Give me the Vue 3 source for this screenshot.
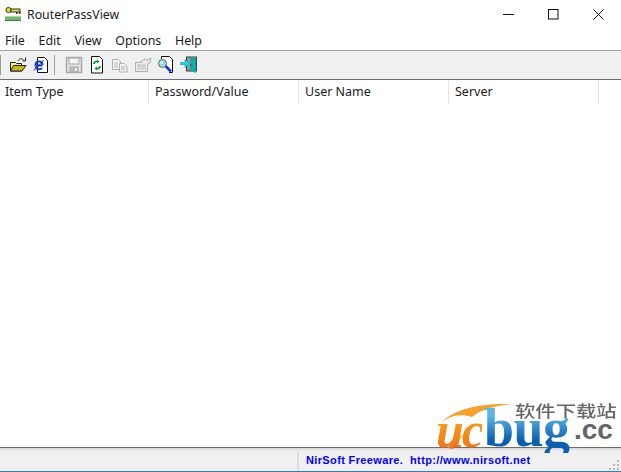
<template>
  <div class="window">
    <!-- Title bar -->
    <div class="titlebar">
      <svg class="app-icon" width="16" height="16" viewBox="0 0 16 16">
        <rect x="0" y="10" width="16" height="5" fill="#6fb56f" />
        <rect x="0" y="10" width="16" height="1" fill="#a8d8a8" />
        <rect x="0" y="14" width="16" height="1" fill="#3f7f3f" />
        <circle cx="3.5" cy="4" r="2.6" fill="#e8e020" stroke="#333" stroke-width="1" />
        <rect x="6" y="3" width="9" height="3" fill="#e8e020" stroke="#333" stroke-width="1" />
        <rect x="11" y="6" width="1.5" height="2" fill="#333" />
        <rect x="14" y="6" width="1.5" height="2" fill="#333" />
      </svg>
      <span class="title">RouterPassView</span>
      <div class="win-controls">
        <svg width="11" height="11" viewBox="0 0 11 11"><path d="M0 5.5h11" stroke="#111" fill="none" /></svg>
        <svg width="11" height="11" viewBox="0 0 11 11"><rect x="0.5" y="0.5" width="9.5" height="9.5" stroke="#111" fill="none" /></svg>
        <svg width="11" height="11" viewBox="0 0 11 11"><path d="M0.5 0.5l10 10M10.5 0.5l-10 10" stroke="#111" fill="none" /></svg>
      </div>
    </div>

    <!-- Menu -->
    <div class="menubar">
      <span v-for="item in menus" :key="item">{{ item }}</span>
    </div>

    <!-- Toolbar -->
    <div class="toolbar">
      <div class="grip"></div>
      <button class="tool">
        <svg width="18" height="18" viewBox="0 0 18 18">
          <path d="M1.500 6.500h5l1 1h5v7.500h-11z" fill="#f4ee7c" stroke="#222" />
          <path d="M1.500 15l3-5.500h12.500l-4 5.500z" fill="#c8b820" stroke="#222" />
          <path d="M9 5c1-2.500 4-3 5-1.500l1 1" fill="none" stroke="#222" />
          <path d="M16.500 1.500v3.500h-3" fill="none" stroke="#222" />
        </svg>
      </button>
      <button class="tool">
        <svg width="18" height="18" viewBox="0 0 18 18">
          <path d="M5.500 1.500h7l3 3v12h-10z" fill="#fff" stroke="#111" />
          <path d="M10.500 9.500h-7c0-2.500 1.500-4 3.500-4s3.500 1.500 3.500 3.500M10 12c-1 1.500-5 2-6.500-1" fill="none" stroke="#1a3fd0" stroke-width="2" />
          <path d="M1.500 14c2 0 7-6 10-10" fill="none" stroke="#0a2aa0" />
        </svg>
      </button>
      <div class="sep"></div>
      <button class="tool">
        <svg width="18" height="18" viewBox="0 0 18 18">
          <path d="M1.500 1.500h15v15h-15z" fill="#e4e4e4" stroke="#a8a8a8" stroke-width="1.500" />
          <rect x="4" y="2" width="10" height="6" fill="#f4f4f4" stroke="#a8a8a8" />
          <rect x="5" y="11" width="8" height="5" fill="#bdbdbd" stroke="#a8a8a8" />
          <rect x="10" y="12" width="2" height="3" fill="#f0f0f0" />
        </svg>
      </button>
      <button class="tool">
        <svg width="18" height="18" viewBox="0 0 18 18">
          <path d="M3.500 0.500h8l3 3v13.500h-11z" fill="#fff" stroke="#111" />
          <path d="M6 8c0-2 2-3 4-2.500M12 10c0 2-2 3-4 2.500" fill="none" stroke="#0d9a2a" stroke-width="1.800" />
          <path d="M9 3.500l2.500 2-2.500 2zM9 10.500l-2.500 2 2.500 2z" fill="#0d9a2a" />
        </svg>
      </button>
      <button class="tool">
        <svg width="18" height="18" viewBox="0 0 18 18">
          <path d="M1.500 3.500h6l2 2v8h-8z" fill="#f0f0f0" stroke="#b0b0b0" />
          <path d="M3 7h4M3 9h4M3 11h4" stroke="#c0c0c0" />
          <path d="M8.500 7.500h5l2.500 2.500v6h-7.500z" fill="#f0f0f0" stroke="#b0b0b0" />
          <path d="M10 11h4M10 13h4" stroke="#b0b0b0" />
        </svg>
      </button>
      <button class="tool">
        <svg width="18" height="18" viewBox="0 0 18 18">
          <path d="M1.500 6.500h12v9h-12z" fill="#f0f0f0" stroke="#b0b0b0" />
          <path d="M3 9h9M3 11h9M3 13h9" stroke="#b8b8b8" />
          <path d="M6 6l5-3 2 1 4-2-1 5-2 1" fill="#e8e8e8" stroke="#b0b0b0" />
        </svg>
      </button>
      <button class="tool">
        <svg width="18" height="18" viewBox="0 0 18 18">
          <path d="M4.500 3v-2.500h8l3 3v13h-3.500" fill="#fff" stroke="#111" />
          <path d="M5 3h8v9h-8z" fill="#fff" />
          <path d="M8.500 10l5.500 5.500" stroke="#1a2ed0" stroke-width="2.500" />
          <circle cx="5.500" cy="7.500" r="4" fill="#8fe4e8" stroke="#666" />
          <circle cx="4.500" cy="6.500" r="1.300" fill="#e8ffff" />
        </svg>
      </button>
      <button class="tool">
        <svg width="18" height="18" viewBox="0 0 18 18">
          <path d="M6 0.500h11v15h-11z" fill="#3a3a3a" />
          <path d="M7 1.500h9v13h-9z" fill="#9a9a9a" />
          <path d="M10 2l6-1v16l-6-2z" fill="#16a8a8" />
          <path d="M11 8v2" stroke="#0c5a5a" />
          <path d="M0.500 6.500h4.500v-3l4.500 4-4.500 4v-3h-4.500z" fill="#18e0e8" stroke="#0f8ea0" stroke-width="0.600" />
        </svg>
      </button>
    </div>

    <!-- List header -->
    <div class="list-header">
      <div v-for="col in columns" :key="col" class="col">{{ col }}</div>
    </div>

    <div class="list-body"></div>

    <!-- Status bar -->
    <div class="statusbar">
      <div class="status-left"></div>
      <div class="status-link">NirSoft Freeware.&nbsp; http://www.nirsoft.net</div>
      <svg class="resize" width="12" height="12" viewBox="0 0 12 12">
        <g fill="#b8b8b8">
          <rect x="9" y="9" width="2" height="2" /><rect x="5" y="9" width="2" height="2" />
          <rect x="1" y="9" width="2" height="2" /><rect x="9" y="5" width="2" height="2" />
          <rect x="5" y="5" width="2" height="2" /><rect x="9" y="1" width="2" height="2" />
        </g>
      </svg>
    </div>

    <!-- Site watermark -->
    <div class="watermark">
      <svg class="swoosh" width="185" height="56" viewBox="0 0 185 56">
        <defs>
          <linearGradient id="orange" x1="0" y1="0" x2="0" y2="1">
            <stop offset="0" stop-color="#fbb03a" />
            <stop offset="1" stop-color="#ee6a12" />
          </linearGradient>
        </defs>
        <path d="M4 24C16 10 40 3 76 4C58 6 46 9 36 17C24 13 12 16 4 24z" fill="#f7a128" />
        <path d="M26 36l-9 13l-5-1l6-12z" fill="url(#orange)" />
      </svg>
      <div class="wm-cn">软件下载站</div>
      <span class="wm-uc">uc</span>
      <span class="wm-bug">bug</span>
      <span class="wm-cc">.cc</span>
    </div>
  </div>
</template>

<script setup>
const menus = ['File', 'Edit', 'View', 'Options', 'Help']
const columns = ['Item Type', 'Password/Value', 'User Name', 'Server']
</script>

<style>
html,
body {
  margin: 0;
  background: #fff;
  overflow: hidden;
}
</style>

<style scoped>
.window {
  position: relative;
  width: 621px;
  height: 472px;
  display: flex;
  flex-direction: column;
  overflow: hidden;
  background: #fff;
  font-family: 'Noto Sans', 'Open Sans', sans-serif;
  font-size: 12px;
  color: #1a1a1a;
}

.titlebar {
  height: 30px;
  flex: none;
  display: flex;
  align-items: center;
  padding-left: 5px;
  box-sizing: border-box;
}

.app-icon {
  margin-right: 6px;
  margin-top: -2px;
}

.title {
  font-size: 12.3px;
  margin-top: -1px;
}

.win-controls {
  margin-left: auto;
  display: flex;
  gap: 34px;
  padding-right: 17px;
  margin-top: -2px;
}

.menubar {
  height: 20px;
  flex: none;
  display: flex;
  align-items: center;
  gap: 13.7px;
  padding-left: 5px;
  font-size: 12.4px;
}

.toolbar {
  height: 30px;
  flex: none;
  box-sizing: border-box;
  border-top: 1px solid #a0a0a0;
  border-bottom: 1px solid #6d6d6d;
  background: #f0f0f0;
  display: flex;
  align-items: center;
}

.grip {
  width: 1px;
  height: 20px;
  background: #999;
  margin-right: 5px;
}

.sep {
  width: 1px;
  height: 20px;
  background: #a0a0a0;
  margin: 0 7px 0 2px;
}

.tool {
  width: 23px;
  height: 24px;
  padding: 0;
  border: none;
  background: none;
  display: flex;
  align-items: center;
  justify-content: center;
}

.list-header {
  height: 24px;
  flex: none;
  display: flex;
}

.col {
  width: 150px;
  box-sizing: border-box;
  padding: 3px 0 0 6px;
  border-right: 1px solid #e5e5e5;
  font-size: 12.5px;
}

.col:first-child {
  width: 149px;
  padding-left: 5px;
}

.list-body {
  flex: 1;
}

.statusbar {
  position: relative;
  height: 25px;
  flex: none;
  box-sizing: border-box;
  border-top: 1px solid #6d6d6d;
  border-bottom: 1px solid #2a7fcf;
  background: #f0f0f0;
  box-shadow: inset 0 2px 0 #dcdcdc;
  display: flex;
  align-items: stretch;
  padding-top: 3px;
}

.status-left {
  width: 297px;
  border-right: 2px solid #dcdcdc;
}

.status-link {
  padding-left: 7px;
  font-family: 'Liberation Sans', Arial, sans-serif;
  font-size: 11px;
  font-weight: 700;
  letter-spacing: 0.36px;
  color: #0000ff;
  line-height: 18px;
}

.resize {
  position: absolute;
  right: 1px;
  bottom: 0;
}

.watermark {
  position: absolute;
  left: 436px;
  top: 400px;
  width: 185px;
  height: 54px;
}

.swoosh {
  position: absolute;
  left: 0;
  top: 0;
}

.wm-cn {
  position: absolute;
  left: 79px;
  top: 2px;
  font-family: 'Noto Sans CJK SC', sans-serif;
  font-size: 16px;
  font-weight: 500;
  color: #666;
  line-height: 16px;
  white-space: nowrap;
  transform: scaleX(1.27);
  transform-origin: left center;
}

.wm-uc,
.wm-bug {
  position: absolute;
  font-family: 'Liberation Serif', serif;
  font-weight: 700;
  font-style: italic;
  background-clip: text;
  -webkit-background-clip: text;
  color: transparent;
}

.wm-uc {
  left: 0;
  top: 5px;
  font-size: 50px;
  line-height: 50px;
  letter-spacing: -2px;
  background-image: linear-gradient(#f9a020 30%, #ee6a12);
}

.wm-bug {
  left: 48px;
  top: 3px;
  font-size: 54px;
  line-height: 50px;
  letter-spacing: -0.5px;
  font-style: normal;
  background-image: linear-gradient(#5fb4e8 25%, #0a5fb0 75%);
}

.wm-cc {
  position: absolute;
  left: 138px;
  top: 18px;
  font-family: 'Liberation Sans', sans-serif;
  font-weight: 700;
  font-size: 28px;
  line-height: 24px;
  color: #666;
}
</style>
